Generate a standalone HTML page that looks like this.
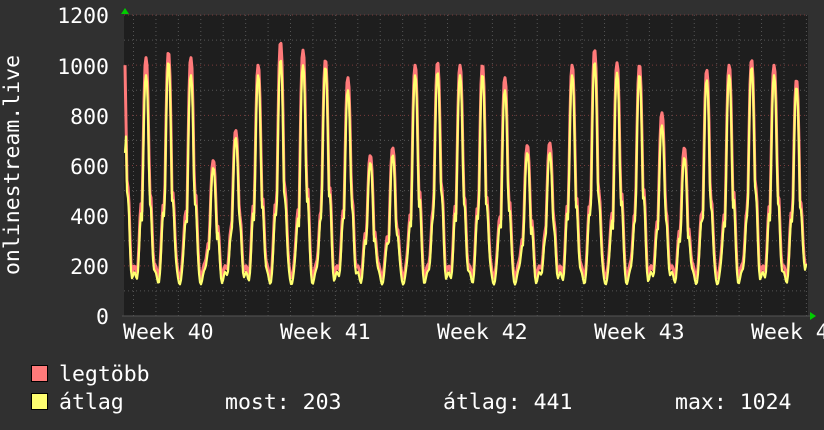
<!DOCTYPE html>
<html><head><meta charset="utf-8"><style>
html,body{margin:0;padding:0;background:#303030;}
svg{display:block}
text{font-family:"DejaVu Sans Mono","Liberation Mono",monospace;fill:#fff;font-size:21.5px}
</style></head><body>
<svg id="g" width="824" height="430" xmlns="http://www.w3.org/2000/svg">
<rect width="824" height="430" fill="#303030"/>
<rect x="124" y="15" width="684" height="301" fill="#1e1e1e"/>
<g id="grid"></g>
<path id="red" fill="none" stroke="#ff7a7a" stroke-width="3" stroke-linejoin="round"/>
<path id="yel" fill="none" stroke="#ffff70" stroke-width="2.2" stroke-linejoin="round"/>
<line x1="122" y1="316" x2="810" y2="316" stroke="#555" stroke-width="1"/>
<polygon points="121,14 129,14 125,8" fill="#0c0"/>
<polygon points="810,312 810,320 816,316" fill="#0c0"/>
<g text-anchor="end">
<text x="109" y="23">1200</text>
<text x="109" y="74">1000</text>
<text x="109" y="124">800</text>
<text x="109" y="174">600</text>
<text x="109" y="224">400</text>
<text x="109" y="274">200</text>
<text x="109" y="324">0</text>
</g>
<text x="123" y="339">Week 40</text>
<text x="280" y="339">Week 41</text>
<text x="437" y="339">Week 42</text>
<text x="594" y="339">Week 43</text>
<text x="751" y="339">Week 44</text>
<text transform="translate(19,165) rotate(-90)" text-anchor="middle">onlinestream.live</text>
<rect x="31.5" y="365.5" width="16" height="16" fill="#ff7a7a" stroke="#000"/>
<rect x="31.5" y="393.5" width="16" height="16" fill="#ffff70" stroke="#000"/>
<text x="59" y="381">legtöbb</text>
<text x="59" y="409">átlag</text>
<text x="225" y="409">most: 203</text>
<text x="443" y="409">átlag: 441</text>
<text x="675" y="409">max: 1024</text>
</svg>
<script>
var Y=function(v){return 316-v*301/1200;};
var g=document.getElementById('grid'),s='';
for(var v=100;v<1200;v+=100){var y=Y(v);s+='<line x1="124" x2="808" y1="'+y+'" y2="'+y+'" stroke="'+(v%200?'#555':'#7a3a3a')+'" stroke-dasharray="1,3"/>';}
s+='<line x1="124" x2="808" y1="15" y2="15" stroke="#7a3a3a" stroke-dasharray="1,3"/>';
for(var x=133.5;x<808;x+=22.43){s+='<line y1="15" y2="316" x1="'+x+'" x2="'+x+'" stroke="#555" stroke-dasharray="1,3"/>';}
g.innerHTML=s;
var peaks=[1030,1050,1030,620,740,1000,1090,1060,1020,950,640,670,1000,1010,1000,1000,950,680,690,1000,1060,1010,1000,810,670,980,1000,1020,1000,940];
var yp=[960,1010,960,590,710,960,1020,1000,990,900,610,640,960,970,960,960,900,650,650,960,1010,970,960,760,630,940,960,990,960,910];
function val(x,arr,mn){
  var d=(x-146)/22.43,i=Math.round(d),f=d-i;
  if(i<0)i=0;if(i>=arr.length)i=arr.length-1;
  var p=arr[i];
  var a=Math.exp(-Math.pow(Math.abs(f)/0.16,2.6));
  var sh=f<0?Math.exp(-Math.pow((f+0.22)/0.11,2))*0.3:Math.exp(-Math.pow((f-0.2)/0.1,2))*0.38;
  var base=mn+50*(1+Math.sin(x*0.9))*0.5;
  var v=base+(p-base)*Math.max(a,sh);
  if(x>=806)v=203;
  return v;
}
function path(arr,mn){var d='M125 '+Y(arr==peaks?1000:650);for(var x=126;x<=807;x+=1){d+=' L'+x+' '+Y(val(x,arr,mn)).toFixed(1);}return d;}
document.getElementById('red').setAttribute('d',path(peaks,150));
document.getElementById('yel').setAttribute('d',path(yp,125));
</script>
</body></html>
